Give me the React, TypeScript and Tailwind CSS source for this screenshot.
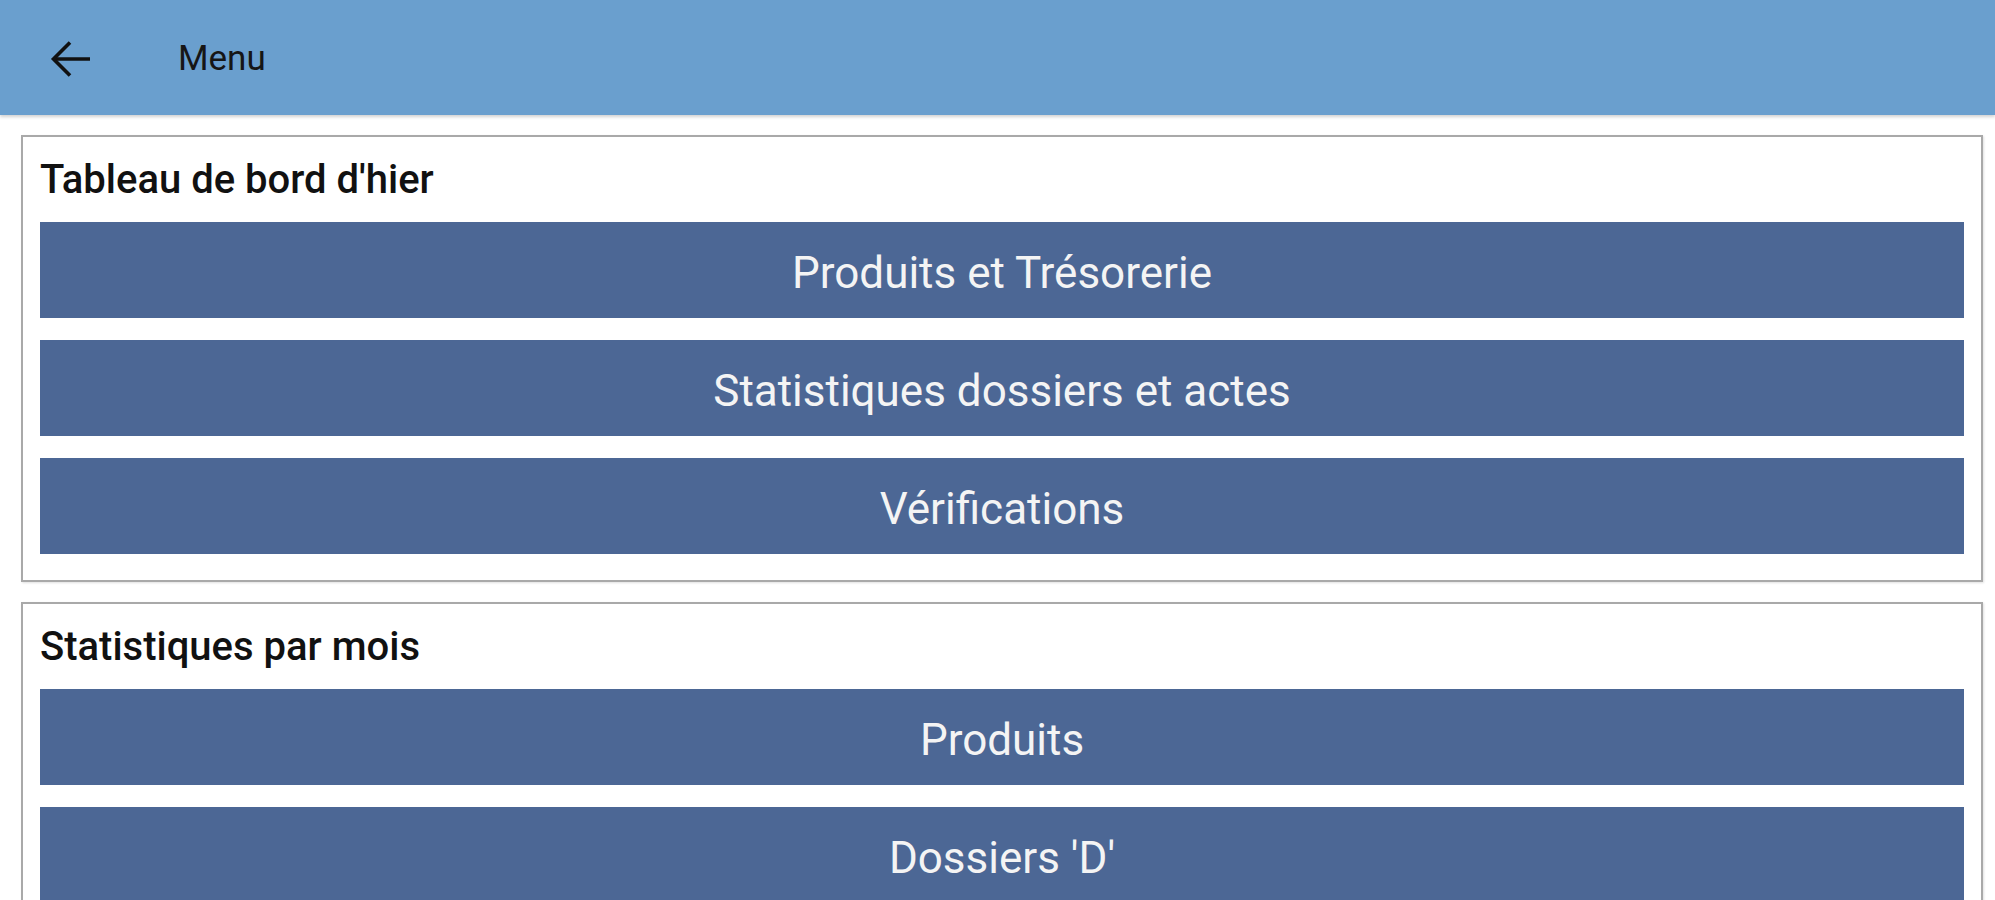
const SECTIONS = [
  {
    title: "Tableau de bord d'hier",
    items: ['Produits et Trésorerie', 'Statistiques dossiers et actes', 'Vérifications'],
  },
  {
    title: 'Statistiques par mois',
    items: ['Produits', "Dossiers 'D'", 'Actes', 'Trésorerie'],
  },
];

function BackArrow() {
  return (
    <svg width="40" height="36" viewBox="0 0 40 36" fill="none" stroke="#111111" strokeWidth="3.6">
      <path d="M3 18H40" />
      <path d="M20 1.5L3.5 18L20 34.5" />
    </svg>
  );
}

export default function App() {
  return (
    <div className="h-[900px] w-full overflow-hidden bg-white" style={{ fontFamily: 'Roboto, "Noto Sans", sans-serif' }}>
      {/* App bar */}
      <header className="flex h-[115px] items-center bg-[#6a9fce] shadow-[0_2px_3px_rgba(0,0,0,0.18)]">
        <div className="ml-[50px] mt-[2px] flex items-center">
          <BackArrow />
        </div>
        <span className="ml-[88px] mt-[4px] text-[35px] text-[#161616]">Menu</span>
      </header>

      {/* Sections */}
      <div className="ml-[21px] mr-[12px] mt-[20px] flex flex-col gap-[20px]">
        {SECTIONS.map((section) => (
          <section
            key={section.title}
            className="border-2 border-[#a9a9a9] bg-white px-[17px] pt-[20px] pb-[26px] shadow-[1px_1px_2px_rgba(0,0,0,0.12)]"
          >
            <h2 className="mb-[20px] text-[40px] font-medium leading-[45px] text-[#111111]">{section.title}</h2>
            <div className="flex flex-col gap-[22px]">
              {section.items.map((item) => (
                <button
                  key={item}
                  className="flex h-[96px] w-full items-center justify-center bg-[#4c6795] pt-[5px] text-[44px] text-[#f4f4f4]"
                >
                  {item}
                </button>
              ))}
            </div>
          </section>
        ))}
      </div>
    </div>
  );
}
